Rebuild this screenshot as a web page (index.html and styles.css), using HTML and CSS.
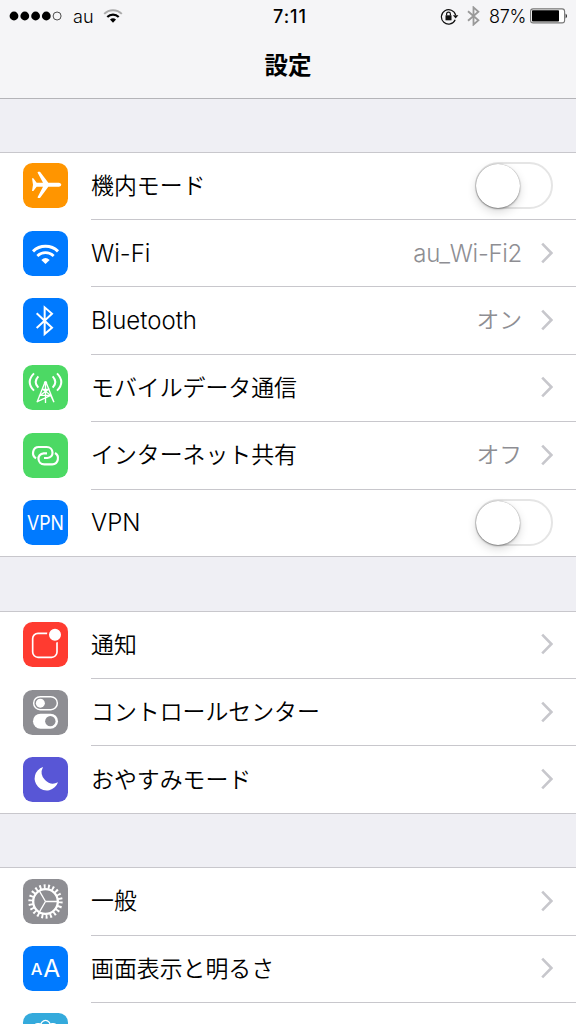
FILE: index.html
```html
<!DOCTYPE html>
<html lang="ja">
<head>
  <meta charset="UTF-8">
  <meta name="viewport" content="width=device-width, initial-scale=1.0">
  <title>設定</title>
  <link rel="stylesheet" href="styles.css">
</head>
<body>
  <header class="header">
    <div class="status">
      <div class="status-left">
        <svg class="signal" viewBox="0 0 54 10">
          <circle cx="5" cy="5" r="4.4"/>
          <circle cx="15.8" cy="5" r="4.4"/>
          <circle cx="26.6" cy="5" r="4.4"/>
          <circle cx="37.3" cy="5" r="4.4"/>
          <circle cx="48.1" cy="5" r="4" fill="none" stroke="#222" stroke-width="0.8"/>
        </svg>
        <span class="carrier">au</span>
        <svg class="status-wifi" viewBox="0 0 20 14" fill="none">
          <path d="M1.2 4.8A12.5 12.5 0 0 1 18.8 4.8" stroke="#aaa" stroke-width="1.9"/>
          <path d="M4.3 8A8.1 8.1 0 0 1 15.7 8" stroke="#000" stroke-width="2.2"/>
          <path d="M7 10.5Q10 8 13 10.5L10 13.7Z" fill="#000"/>
        </svg>
      </div>
      <span class="clock">7:11</span>
      <div class="status-right">
        <svg class="lock" viewBox="0 0 19 17" fill="none" stroke="#111">
          <path d="M15.2 11.7A7.2 7.2 0 1 1 15.6 7.2" stroke-width="1.2"/>
          <path d="M12.9 7.2H18.4L15.6 10.6Z" fill="#111" stroke="none"/>
          <rect x="5.5" y="7.3" width="6" height="5" fill="#111" stroke="none"/>
          <path d="M6.6 7.5V6A1.9 1.9 0 0 1 10.4 6V7.5" stroke-width="1.2"/>
        </svg>
        <svg class="status-bt" viewBox="0 0 13 20" fill="none" stroke="#999" stroke-width="1.8">
          <path d="M1 5.2L11.4 14.2L6.5 18.6V1.4L11.4 5.8L1 14.8"/>
        </svg>
        <span class="percent">87%</span>
        <svg class="battery" viewBox="0 0 38 16">
          <rect x="0.6" y="0.9" width="34" height="14" rx="2.5" fill="#fff" stroke="#777" stroke-width="1.1"/>
          <rect x="2" y="2.3" width="27" height="11.3" rx="0.8"/>
          <path d="M35.7 5.5Q38 8 35.7 10.5Z"/>
        </svg>
      </div>
    </div>
    <h1 class="title">設定</h1>
  </header>

  <main>
    <section class="group">
      <div class="row">
        <svg class="icon orange" viewBox="0 0 135 135">
          <path fill="#fff" d="M27 46H31L41 59H60L44 29Q43 26 46 26H51L76 59H108Q115 61 115 65Q115 69 108 71H76L51 105H46Q43 105 44 102L60 71H41L31 84H27L30 65Z"/>
        </svg>
        <div class="cell"><span class="label">機内モード</span><span class="switch"></span></div>
      </div>
      <div class="row">
        <svg class="icon blue" viewBox="0 0 135 135" fill="none" stroke="#fff">
          <path d="M30 61A54 54 0 0 1 105 61" stroke-width="9"/>
          <path d="M43 75A35 35 0 0 1 92 75" stroke-width="8"/>
          <path d="M55 87Q67.5 75 80 87L67.5 99Z" fill="#fff" stroke="none"/>
        </svg>
        <div class="cell">
          <span class="label latin">Wi-Fi</span><span class="value latin network">au_Wi-Fi2</span>
          <svg class="arrow" viewBox="0 0 12 22"><path d="M1.2 1.6L10.4 11L1.2 20.4"/></svg>
        </div>
      </div>
      <div class="row">
        <svg class="icon blue" viewBox="0 0 135 135" fill="none" stroke="#fff" stroke-width="6">
          <path d="M41 46L87 89L65 108V28L87 47L41 90"/>
        </svg>
        <div class="cell">
          <span class="label latin">Bluetooth</span><span class="value">オン</span>
          <svg class="arrow" viewBox="0 0 12 22"><path d="M1.2 1.6L10.4 11L1.2 20.4"/></svg>
        </div>
      </div>
      <div class="row">
        <svg class="icon green" viewBox="0 0 135 135" fill="none" stroke="#fff" stroke-width="4">
          <path d="M33 25Q7 51 33 77M46 34Q30 51 46 68M102 25Q128 51 102 77M89 34Q105 51 89 68" stroke-width="6"/>
          <path d="M65 54L42 112M70 54L93 112M67.5 54V114M59 73H76L52 91H83L43 110M59 73L83 91L92 110" stroke-width="4"/>
          <circle cx="67.5" cy="53" r="5" fill="#fff" stroke="none"/>
        </svg>
        <div class="cell">
          <span class="label">モバイルデータ通信</span>
          <svg class="arrow" viewBox="0 0 12 22"><path d="M1.2 1.6L10.4 11L1.2 20.4"/></svg>
        </div>
      </div>
      <div class="row">
        <svg class="icon green" viewBox="0 0 135 135" fill="none" stroke="#fff" stroke-width="6.5">
          <path d="M39 76C24 67 29 42 47 42H71C93 42 95 74 73 75H63"/>
          <path d="M39 76C24 67 29 42 47 42H71C93 42 95 74 73 75H63" transform="rotate(180 67.5 68)"/>
        </svg>
        <div class="cell">
          <span class="label">インターネット共有</span><span class="value">オフ</span>
          <svg class="arrow" viewBox="0 0 12 22"><path d="M1.2 1.6L10.4 11L1.2 20.4"/></svg>
        </div>
      </div>
      <div class="row">
        <svg class="icon blue" viewBox="0 0 135 135">
          <text class="icon-text" x="12" y="89" font-size="60" textLength="111" lengthAdjust="spacingAndGlyphs">VPN</text>
        </svg>
        <div class="cell"><span class="label latin">VPN</span><span class="switch"></span></div>
      </div>
    </section>

    <section class="group">
      <div class="row">
        <svg class="icon red" viewBox="0 0 135 135">
          <rect x="29" y="34" width="73" height="72" rx="16" fill="none" stroke="#fff" stroke-width="5"/>
          <circle cx="96" cy="38" r="21" fill="#fff" stroke="#ff3b30" stroke-width="6"/>
        </svg>
        <div class="cell">
          <span class="label">通知</span>
          <svg class="arrow" viewBox="0 0 12 22"><path d="M1.2 1.6L10.4 11L1.2 20.4"/></svg>
        </div>
      </div>
      <div class="row">
        <svg class="icon gray" viewBox="0 0 135 135">
          <rect x="32" y="20" width="71" height="39" rx="19.5" fill="none" stroke="#fff" stroke-width="4.5"/>
          <circle cx="52" cy="39.5" r="13.5" fill="#fff"/>
          <rect x="30" y="71" width="75" height="45" rx="22.5" fill="#fff"/>
          <circle cx="82" cy="93.5" r="15.5" fill="#8e8e93"/>
        </svg>
        <div class="cell">
          <span class="label">コントロールセンター</span>
          <svg class="arrow" viewBox="0 0 12 22"><path d="M1.2 1.6L10.4 11L1.2 20.4"/></svg>
        </div>
      </div>
      <div class="row">
        <svg class="icon purple" viewBox="0 0 135 135">
          <path fill="#fff" d="M60 30A36 36 0 1 0 105 76A34 34 0 0 1 60 30Z"/>
        </svg>
        <div class="cell">
          <span class="label">おやすみモード</span>
          <svg class="arrow" viewBox="0 0 12 22"><path d="M1.2 1.6L10.4 11L1.2 20.4"/></svg>
        </div>
      </div>
    </section>

    <section class="group">
      <div class="row">
        <svg class="icon gray" viewBox="0 0 135 135" fill="none" stroke="#fff">
          <circle cx="67.5" cy="67.5" r="37" stroke-width="7"/>
          <circle cx="67.5" cy="67.5" r="45" stroke-width="13" pathLength="220" stroke-dasharray="4.4 5.6"/>
          <path d="M67.5 67.5H104M67.5 67.5L49 35.5M67.5 67.5L49 99.5" stroke-width="4"/>
        </svg>
        <div class="cell">
          <span class="label">一般</span>
          <svg class="arrow" viewBox="0 0 12 22"><path d="M1.2 1.6L10.4 11L1.2 20.4"/></svg>
        </div>
      </div>
      <div class="row">
        <svg class="icon blue" viewBox="0 0 135 135">
          <text class="icon-text" x="23" y="86" font-size="46" font-weight="500" textLength="35" lengthAdjust="spacingAndGlyphs">A</text>
          <text class="icon-text" x="61" y="92" font-size="73" textLength="51" lengthAdjust="spacingAndGlyphs">A</text>
        </svg>
        <div class="cell">
          <span class="label">画面表示と明るさ</span>
          <svg class="arrow" viewBox="0 0 12 22"><path d="M1.2 1.6L10.4 11L1.2 20.4"/></svg>
        </div>
      </div>
      <div class="row">
        <svg class="icon cyan" viewBox="0 0 135 135" fill="none" stroke="#fff" stroke-width="4">
          <ellipse cx="67.5" cy="41" rx="15" ry="19"/>
          <ellipse cx="67.5" cy="41" rx="15" ry="19" transform="rotate(45 67.5 67.5)"/>
          <ellipse cx="67.5" cy="41" rx="15" ry="19" transform="rotate(90 67.5 67.5)"/>
          <ellipse cx="67.5" cy="41" rx="15" ry="19" transform="rotate(-45 67.5 67.5)"/>
        </svg>
        <div class="cell"></div>
      </div>
    </section>
  </main>
</body>
</html>
```
FILE: styles.css
```css
* {
  box-sizing: border-box;
}
body {
  margin: 0;
  height: 1024px;
  overflow: hidden;
  background: #efeff4;
  color: #000;
  font-family: Inter, "Noto Sans CJK JP", sans-serif;
}
svg {
  display: block;
  flex: none;
}
.header {
  height: 99px;
  background: #f5f5f7;
  border-bottom: 1px solid #b4b4b8;
}
.status {
  display: grid;
  grid-template-columns: 1fr auto 1fr;
  align-items: center;
  height: 32px;
  padding: 0 8px 0 9px;
  font-size: 18px;
  font-weight: 350;
}
.status-left,
.status-right {
  display: flex;
  align-items: center;
}
.status-right {
  justify-content: flex-end;
}
.signal {
  width: 54px;
  height: 10px;
}
.carrier {
  margin: 0 9px 0 10px;
}
.status-wifi {
  width: 20px;
  height: 14px;
}
.clock {
  padding-left: 3px;
  font-size: 18px;
  font-weight: 500;
  letter-spacing: 1px;
}
.lock {
  width: 19px;
  height: 17px;
}
.status-bt {
  width: 13px;
  height: 20px;
  margin: 0 9px 0 8px;
}
.percent {
  letter-spacing: -0.3px;
}
.battery {
  width: 38px;
  height: 16px;
  margin-left: 4px;
}
.title {
  margin: 0;
  font-size: 23.5px;
  line-height: 68px;
  font-weight: 700;
  text-align: center;
}
.group {
  margin-top: 53.6px;
  background: #fff;
  border-top: 1px solid #c8c7cc;
  border-bottom: 1px solid #c8c7cc;
}
.group:first-child {
  margin-top: 52.6px;
}
.row {
  display: flex;
  align-items: center;
  height: 67.4px;
  padding-left: 23px;
}
.row:last-child {
  height: 66.4px;
}
.icon {
  width: 45px;
  height: 45px;
  margin: 0 23px 1px 0;
  border-radius: 9.5px;
}
.icon-text {
  fill: #fff;
  font-family: Inter, sans-serif;
}
.orange { background: #ff9500; }
.blue { background: #007aff; }
.green { background: #4cd964; }
.red { background: #ff3b30; }
.gray { background: #8e8e93; }
.purple { background: #5856d6; }
.cyan { background: #34aadc; }
.cell {
  display: flex;
  flex: 1;
  align-items: center;
  height: 100%;
  padding-right: 23px;
  border-bottom: 1px solid #c8c7cc;
}
.row:last-child .cell {
  border-bottom: 0;
}
.label {
  flex: 1;
  padding-bottom: 4px;
  font-size: 22.9px;
  font-weight: 350;
}
.value {
  padding-bottom: 4px;
  color: #8e8e93;
  font-size: 22.8px;
  font-weight: 350;
}
.latin {
  padding-bottom: 0;
  font-size: 24px;
}
.network {
  letter-spacing: -0.3px;
}
.arrow {
  width: 12px;
  height: 22px;
  margin: 0 0 1px 19px;
  fill: none;
  stroke: #c7c7cc;
  stroke-width: 2.6;
}
.switch {
  width: 78px;
  height: 47px;
  margin-bottom: 1px;
  border: 2px solid #e5e5e5;
  border-radius: 24px;
}
.switch::before {
  content: "";
  display: block;
  width: 44px;
  height: 44px;
  margin-left: -1px;
  border-radius: 50%;
  background: #fff;
  box-shadow: 0 0 1px rgba(0, 0, 0, 0.4), 0 1px 2px rgba(0, 0, 0, 0.35), 0 4px 10px rgba(0, 0, 0, 0.15);
}
```
